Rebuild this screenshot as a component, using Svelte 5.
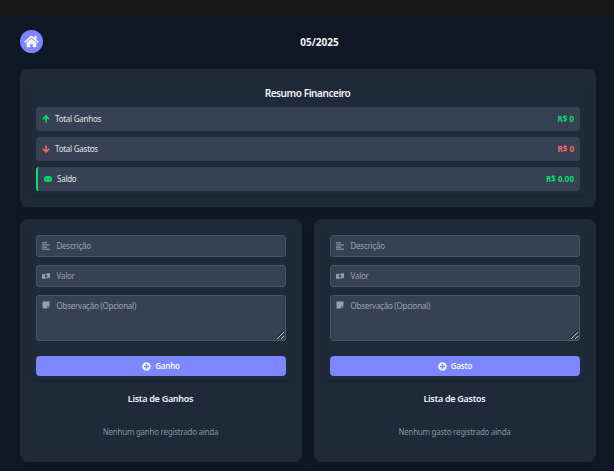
<script>
  const rows = [
    { label: 'Total Ganhos', value: 'R$ 0', tone: 'up', icon: 'up' },
    { label: 'Total Gastos', value: 'R$ 0', tone: 'down', icon: 'down' },
    { label: 'Saldo', value: 'R$ 0.00', tone: 'up', icon: 'coin' }
  ];
  const panels = [
    { button: 'Ganho', title: 'Lista de Ganhos', empty: 'Nenhum ganho registrado ainda' },
    { button: 'Gasto', title: 'Lista de Gastos', empty: 'Nenhum gasto registrado ainda' }
  ];
</script>

<div class="topbar"></div>
<main>
  <header>
    <button class="home" aria-label="Início">
      <svg viewBox="0 0 576 512" width="15" height="13"><path d="M280.37 148.26L96 300.11V464a16 16 0 0 0 16 16l112.06-.29a16 16 0 0 0 15.92-16V368a16 16 0 0 1 16-16h64a16 16 0 0 1 16 16v95.64a16 16 0 0 0 16 16.05L464 480a16 16 0 0 0 16-16V300L295.67 148.26a12.19 12.19 0 0 0-15.3 0zM571.6 251.47L488 182.56V44.05a12 12 0 0 0-12-12h-56a12 12 0 0 0-12 12v72.61L318.47 43a48 48 0 0 0-61 0L4.34 251.47a12 12 0 0 0-1.6 16.9l25.5 31A12 12 0 0 0 45.15 301l235.22-193.74a12.19 12.19 0 0 1 15.3 0L530.9 301a12 12 0 0 0 16.9-1.6l25.5-31a12 12 0 0 0-1.7-16.93z" /></svg>
    </button>
    <h1>05/2025</h1>
  </header>

  <section class="card summary">
    <div class="inner">
      <h2 class="heading">Resumo Financeiro</h2>
      {#each rows as row}
        <div class="row" class:total={row.icon === 'coin'}>
          <span class="icon {row.tone}">
            {#if row.icon === 'coin'}
              <svg viewBox="0 0 8 8" width="8" height="8"><path d="M2 1h4l2 1.500v3L6 7H2L0 5.500v-3z" /><path class="cut" d="M1 3.500h2M5 3.500h2M2 5.500h1M5 5.500h1M3.500 2.500h1M3.500 4.500h1" /></svg>
            {:else}
              <svg class="arrow" viewBox="0 0 16 16" width="8" height="8">
                {#if row.icon === 'up'}<path d="M8 15V2M1.500 8.500L8 2l6.500 6.500" />{:else}<path d="M8 1v13M1.500 7.500L8 14l6.500-6.500" />{/if}
              </svg>
            {/if}
          </span>
          <span class="label">{row.label}</span>
          <strong class={row.tone}>{row.value}</strong>
        </div>
      {/each}
    </div>
  </section>

  <div class="columns">
    {#each panels as panel}
      <section class="card">
        <div class="inner form">
          <div class="field">
            <svg class="dim" viewBox="0 0 16 16" width="8" height="8"><path d="M0 0h10v3H0zM0 4.500h16v3H0zM0 9h10v3H0zM0 13h16v3H0z" /></svg>
            <span>Descrição</span>
          </div>
          <div class="field">
            <svg viewBox="0 0 16 12" width="8" height="6"><path fill-rule="evenodd" d="M0 1.500C5 4 10-1 16 1v9.500C11 8 6 13 0 11zM8 3a2.500 3 0 1 0 0 6a2.500 3 0 1 0 0-6zM1 3v2l2-1.500zM15 9V7l-2 1.500z" /></svg>
            <span>Valor</span>
          </div>
          <div class="field area">
            <svg viewBox="0 0 448 512" width="8" height="8"><path d="M312 320h136V56c0-13.300-10.700-24-24-24H24C10.700 32 0 42.700 0 56v400c0 13.300 10.700 24 24 24h264V344c0-13.200 10.800-24 24-24zm129 55l-98 98c-4.500 4.500-10.600 7-17 7h-6V352h128v6.100c0 6.300-2.500 12.400-7 16.900z" /></svg>
            <span>Observação (Opcional)</span>
            <svg class="grip" viewBox="0 0 8 8" width="8" height="8"><path class="shade" d="M0 7L7 0M4 7.500L7.500 4" /><path d="M1 8L8 1M5 8L8 5" /></svg>
          </div>
          <button class="add">
            <svg viewBox="0 0 512 512" width="9" height="9"><path d="M256 8C119 8 8 119 8 256s111 248 248 248 248-111 248-248S393 8 256 8zm144 276c0 6.600-5.400 12-12 12h-92v92c0 6.600-5.400 12-12 12h-56c-6.600 0-12-5.400-12-12v-92h-92c-6.600 0-12-5.400-12-12v-56c0-6.600 5.400-12 12-12h92v-92c0-6.600 5.400-12 12-12h56c6.600 0 12 5.400 12 12v92h92c6.600 0 12 5.400 12 12v56z" /></svg>
            <span>{panel.button}</span>
          </button>
        </div>
        <h2 class="list-title">{panel.title}</h2>
        <p>{panel.empty}</p>
      </section>
    {/each}
  </div>
</main>

<style>
  :global(body) { background: #101828; }
  * { box-sizing: border-box; }
  .topbar { height: 14px; background: #181818; }
  main {
    height: 457px;
    padding: 16px 18px 0 20px;
    background: #101828;
    color: #f3f4f6;
    font: 8px/12px "Noto Sans", "Open Sans", sans-serif;
    letter-spacing: -0.25px;
    overflow: hidden;
  }
  h1, h2, p { margin: 0; }
  button { border: 0; padding: 0; font: inherit; letter-spacing: inherit; color: #f3f4f6; }
  svg { display: block; flex: none; fill: currentColor; }
  header { display: flex; align-items: center; height: 23px; margin-bottom: 16px; }
  .home {
    display: flex; align-items: center; justify-content: center;
    width: 23px; height: 23px; border-radius: 50%; background: #7c86ff; flex: none;
  }
  h1 { flex: 1; padding-top: 1px; text-align: center; font-size: 10px; line-height: 14px; font-weight: 700; letter-spacing: 0.03px; }
  .card {
    background: #1e2939; border-radius: 8px; padding: 12px;
    box-shadow: 0 5px 8px -2px rgba(0, 0, 0, 0.12);
  }
  .inner { padding: 4px; border-radius: 4px; box-shadow: 0 2px 3px -1px rgba(0, 0, 0, 0.13), 0 0 2px rgba(0, 0, 0, 0.05); }
  .summary { height: 138px; }
  .summary .inner { height: 114px; padding-top: 5px; display: flex; flex-direction: column; gap: 6px; }
  .heading { height: 15px; padding-right: 1px; text-align: center; font-size: 10px; line-height: 14px; font-weight: 600; letter-spacing: -0.42px; }
  .row {
    display: flex; align-items: center; height: 24px; flex: none;
    padding: 0 6px; background: #364153; border-radius: 3px; color: #e5e7eb;
  }
  .row.total { border-left: 2px solid #05df72; }
  .icon { margin-right: 5px; }
  .label { flex: 1; }
  .row strong { font-weight: 700; letter-spacing: 0.03px; }
  .up { color: #05df72; }
  .down { color: #ff6467; }
  .arrow { fill: none; stroke: currentColor; stroke-width: 3.2; }
  .cut { fill: none; stroke: #364153; stroke-width: 0.5; }
  .columns { display: grid; grid-template-columns: 1fr 1fr; gap: 12px; margin-top: 12px; }
  .columns .card { height: 243px; }
  .form { height: 149px; display: flex; flex-direction: column; gap: 8px; }
  .field {
    position: relative; display: flex; align-items: center; gap: 6.500px;
    height: 22px; flex: none; padding: 0 5px;
    background: #364153; border: 1px solid #4a5565; border-radius: 3px; color: #99a1af;
  }
  .dim { opacity: 0.7; }
  .area { height: 46px; align-items: flex-start; padding-top: 5px; }
  .area span { margin-top: -0.6px; }
  .grip { position: absolute; right: 1px; bottom: 1px; fill: none; stroke: #d8dce2; stroke-width: 0.8; }
  .grip .shade { stroke: #17202d; }
  .add {
    display: flex; align-items: center; justify-content: center; gap: 4px;
    height: 20px; margin-top: 7px; background: #7c86ff; border-radius: 4px; font-weight: 600;
  }
  .list-title { margin-top: 12px; padding-right: 1px; text-align: center; font-size: 9px; line-height: 14px; font-weight: 600; letter-spacing: -0.28px; }
  p { margin-top: 20px; padding-right: 1px; text-align: center; color: #8391a1; letter-spacing: -0.26px; }
</style>
